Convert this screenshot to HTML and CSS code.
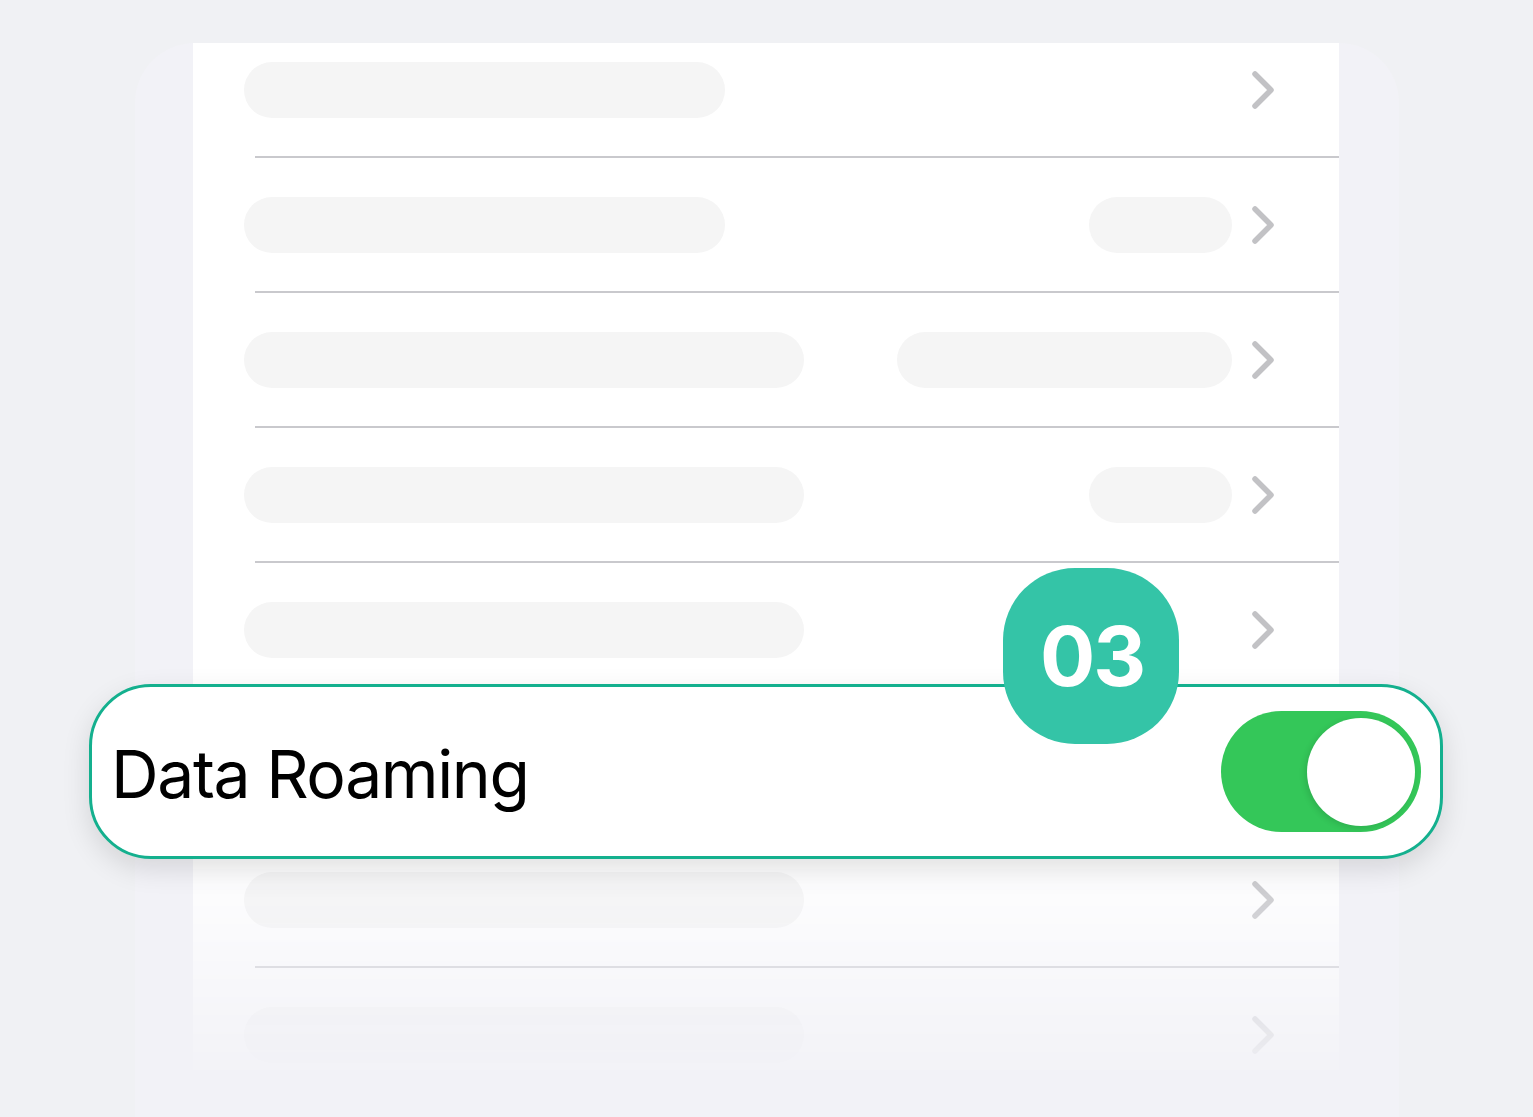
FILE: index.html
```html
<!DOCTYPE html>
<html lang="en">
<head>
  <meta charset="UTF-8" />
  <title>Data Roaming</title>
  <link rel="stylesheet" href="styles.css">
</head>
<body>

  <div class="stage">
    <div class="backdrop">
      <div class="panel">
        <div class="list">

          <div class="row">
            <div class="row-body">
              <span class="pill"></span>
              <div class="row-right">
                <svg class="chevron" width="26" height="38" viewBox="0 0 26 38"><polyline points="5,3 21,19 5,35" /></svg>
              </div>
            </div>
            <div class="sep"></div>
          </div>

          <div class="row">
            <div class="row-body">
              <span class="pill"></span>
              <div class="row-right">
                <span class="pill value"></span>
                <svg class="chevron" width="26" height="38" viewBox="0 0 26 38"><polyline points="5,3 21,19 5,35" /></svg>
              </div>
            </div>
            <div class="sep"></div>
          </div>

          <div class="row">
            <div class="row-body">
              <span class="pill wide"></span>
              <div class="row-right">
                <span class="pill value long"></span>
                <svg class="chevron" width="26" height="38" viewBox="0 0 26 38"><polyline points="5,3 21,19 5,35" /></svg>
              </div>
            </div>
            <div class="sep"></div>
          </div>

          <div class="row">
            <div class="row-body">
              <span class="pill wide"></span>
              <div class="row-right">
                <span class="pill value"></span>
                <svg class="chevron" width="26" height="38" viewBox="0 0 26 38"><polyline points="5,3 21,19 5,35" /></svg>
              </div>
            </div>
            <div class="sep"></div>
          </div>

          <div class="row">
            <div class="row-body">
              <span class="pill wide"></span>
              <div class="row-right">
                <svg class="chevron" width="26" height="38" viewBox="0 0 26 38"><polyline points="5,3 21,19 5,35" /></svg>
              </div>
            </div>
            <div class="sep"></div>
          </div>

          <div class="row">
            <div class="row-body">
              <span class="pill wide"></span>
              <div class="row-right">
                <svg class="chevron" width="26" height="38" viewBox="0 0 26 38"><polyline points="5,3 21,19 5,35" /></svg>
              </div>
            </div>
            <div class="sep"></div>
          </div>

          <div class="row">
            <div class="row-body">
              <span class="pill wide"></span>
              <div class="row-right">
                <svg class="chevron" width="26" height="38" viewBox="0 0 26 38"><polyline points="5,3 21,19 5,35" /></svg>
              </div>
            </div>
            <div class="sep"></div>
          </div>

          <div class="row">
            <div class="row-body">
              <span class="pill wide"></span>
              <div class="row-right">
                <svg class="chevron" width="26" height="38" viewBox="0 0 26 38"><polyline points="5,3 21,19 5,35" /></svg>
              </div>
            </div>
          </div>

        </div>
      </div>
    </div>

    <!-- highlighted setting -->
    <div class="card">
      <span class="card-label">Data Roaming</span>
      <div class="toggle">
        <span class="knob"></span>
      </div>
    </div>

    <div class="badge">03</div>
  </div>

</body>
</html>
```

FILE: styles.css
```css
body {
  margin: 0;
  background: #f0f1f4;
  font-family: Inter, "Noto Sans", sans-serif;
}
.stage {
  position: relative;
  width: 1533px;
  height: 1117px;
  padding-top: 43px;
  box-sizing: border-box;
  overflow: hidden;
}
.backdrop {
  margin-left: 135px;
  width: 1264px;
  height: 1074px;
  background: #f2f2f7;
  border-radius: 60px 60px 0 0;
}
.panel {
  margin-left: 58px;
  width: 1146px;
  height: 1032px;
  background: #fff;
  overflow: hidden;
  -webkit-mask-image: linear-gradient(to bottom, #000 790px, rgba(0, 0, 0, 0.05) 1032px);
  mask-image: linear-gradient(to bottom, #000 790px, rgba(0, 0, 0, 0.05) 1032px);
}
.list {
  margin-top: -20px;
}
.row-body {
  height: 133px;
  display: flex;
  align-items: center;
  padding: 0 63px 0 51px;
}
.sep {
  height: 2px;
  margin-left: 62px;
  background: #c9c9cd;
}
.pill {
  display: block;
  flex: none;
  width: 481px;
  height: 56px;
  border-radius: 28px;
  background: #f5f5f5;
}
.pill.wide {
  width: 560px;
}
.pill.value {
  width: 143px;
  margin-right: 18px;
}
.pill.value.long {
  width: 335px;
}
.row-right {
  margin-left: auto;
  display: flex;
  align-items: center;
}
.chevron {
  display: block;
  flex: none;
  width: 26px;
  height: 38px;
  fill: none;
  stroke: #c2c2c5;
  stroke-width: 5.5;
  stroke-linecap: round;
  stroke-linejoin: round;
}
.card {
  position: absolute;
  left: 89px;
  top: 684px;
  width: 1354px;
  height: 175px;
  box-sizing: border-box;
  border: 3px solid #14b08e;
  border-radius: 62px;
  background: #fff;
  box-shadow: 0 10px 28px rgba(0, 0, 0, 0.12);
  display: flex;
  align-items: center;
  padding: 0 19px 0 19px;
}
.card-label {
  font-size: 66px;
  color: #000;
  letter-spacing: -1.4px;
  margin-top: 4px;
}
.toggle {
  margin-left: auto;
  width: 200px;
  height: 121px;
  border-radius: 61px;
  background: #34c759;
  display: flex;
  align-items: center;
  justify-content: flex-end;
  padding-right: 6px;
  box-sizing: border-box;
}
.knob {
  width: 108px;
  height: 108px;
  border-radius: 50%;
  background: #fff;
  box-shadow: -2px 2px 6px rgba(0, 0, 0, 0.12);
}
.badge {
  position: absolute;
  left: 1003px;
  top: 568px;
  width: 176px;
  height: 176px;
  box-sizing: border-box;
  padding-left: 2px;
  border-radius: 72px;
  background: #34c4a7;
  color: #fff;
  font-size: 82px;
  font-weight: 700;
  letter-spacing: -2px;
  display: flex;
  align-items: center;
  justify-content: center;
}
```
